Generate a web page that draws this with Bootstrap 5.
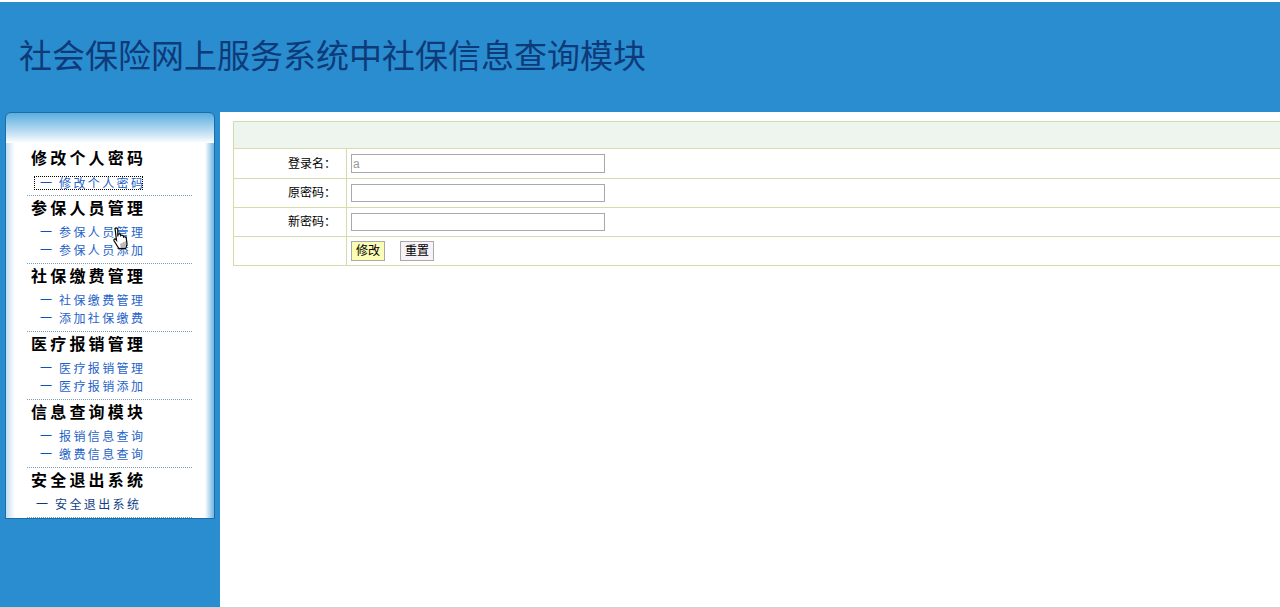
<!DOCTYPE html>
<html lang="zh-CN">

<head>
  <meta charset="UTF-8" />
  <title>社会保险网上服务系统</title>
  <link href="https://cdn.jsdelivr.net/npm/bootstrap@5.3.0/dist/css/bootstrap.min.css" rel="stylesheet" />
  <style>
    html, body { height: 608px; overflow: hidden; }
    body {
      font-family: "Liberation Sans", "Noto Sans CJK SC", sans-serif;
      font-size: 12px;
      color: #000;
      background: #fff;
      padding-top: 2px;
      border-bottom: 1px solid #d0d0d0;
    }
    #top-bar { height: 110px; background: #2a8dd0; padding: 0 0 6px 19px; }
    #top-bar h1 { font-size: 33px; font-weight: 400; color: #0d3a78; margin: 0; line-height: 1; font-family: "Noto Sans CJK SC", sans-serif; }
    #content-wrap { height: 495px; }
    #side-col { width: 220px; flex: none; background: #2a8dd0; padding-left: 5px; }
    #side-panel {
      width: 210px;
      height: 407px;
      border: 1px solid #1a6ea8;
      border-top-left-radius: 6px;
      border-top-right-radius: 6px;
      padding: 33px 0 0 21px;
      background:
        linear-gradient(to bottom, #5aaee0 0, #cfe6f6 22px, #fff 30px, rgba(255,255,255,0) 30px),
        linear-gradient(to right, #c4def4 0, #fff 9px, #fff 199px, #6fb4e2 208px);
    }
    .menu-group { width: 165px; border-bottom: 1px dotted #7a9fb5; padding-bottom: 4px; }
    .menu-group h5 {
      font-family: "Noto Sans CJK SC", sans-serif;
      font-size: 16px;
      font-weight: 700;
      letter-spacing: 3.2px;
      line-height: 22px;
      margin: 0 0 5px 4px;
      color: #000;
    }
    .menu-link {
      display: flex;
      height: 18px;
      line-height: 18px;
      margin-left: 13px;
      color: #1f63c8;
      text-decoration: none;
      font-family: "Noto Sans CJK SC", sans-serif;
      font-size: 12px;
      letter-spacing: 2.4px;
      white-space: nowrap;
    }
    .menu-link i { font-style: normal; width: 19px; letter-spacing: 0; flex: none; color: #0a55b8; }
    .menu-link.active-link { outline: 1px dotted #000; outline-offset: -1px; margin-left: 7px; padding-left: 6px; width: 109px; height: 14px; line-height: 14px; margin-top: 8px; margin-bottom: 1px; }
    .menu-link.dark-link { color: #123f86; margin-left: 9px; }
    .menu-link.dark-link i { color: #0d3a78; }
    #main-col { flex: 1 1 auto; min-width: 0; overflow: hidden; padding: 9px 0 0 13px; }
    #pwd-table { width: 1060px; border-collapse: collapse; margin: 0; }
    #pwd-table td { border: 1px solid #d3dcaa; padding: 0 4px; vertical-align: middle; height: 29px; }
    #pwd-table tr.head-row td { background: #eef5ee; height: 27px; }
    #pwd-table tr.first-row td { height: 30px; }
    #pwd-table td.label-cell { width: 113px; text-align: right; padding: 0 10px 2px 4px; font-family: "Noto Sans CJK SC", sans-serif; }
    .text-box { width: 254px; height: 18px; border: 1px solid #a9a9a9; padding: 0 1px; font-size: 12px; color: #999; display: block; outline: 0; }
    tr.first-row .text-box { height: 19px; }
    .small-btn {
      width: 34px;
      height: 20px;
      padding: 0 0 2px;
      border: 1px solid #a9a9a9;
      border-radius: 0;
      font-family: "Noto Sans CJK SC", sans-serif;
      font-size: 12px;
      line-height: 16px;
      color: #000;
      background: #f7f2f7;
    }
    .small-btn.yellow-btn { background: #fbfdb4; }
    .btn-gap { margin-left: 15px; }
    #hand-cursor { position: absolute; left: 112px; top: 227px; }
  </style>
</head>

<body>
  <div id="top-bar" class="d-flex align-items-center">
    <h1>社会保险网上服务系统中社保信息查询模块</h1>
  </div>
  <div id="content-wrap" class="d-flex">
    <div id="side-col">
      <div id="side-panel">
        <div class="menu-group">
          <h5>修改个人密码</h5>
          <a class="menu-link active-link" href="#"><i>一</i>修改个人密码</a>
        </div>
        <div class="menu-group">
          <h5>参保人员管理</h5>
          <a class="menu-link" href="#"><i>一</i>参保人员管理</a>
          <a class="menu-link" href="#"><i>一</i>参保人员添加</a>
        </div>
        <div class="menu-group">
          <h5>社保缴费管理</h5>
          <a class="menu-link" href="#"><i>一</i>社保缴费管理</a>
          <a class="menu-link" href="#"><i>一</i>添加社保缴费</a>
        </div>
        <div class="menu-group">
          <h5>医疗报销管理</h5>
          <a class="menu-link" href="#"><i>一</i>医疗报销管理</a>
          <a class="menu-link" href="#"><i>一</i>医疗报销添加</a>
        </div>
        <div class="menu-group">
          <h5>信息查询模块</h5>
          <a class="menu-link" href="#"><i>一</i>报销信息查询</a>
          <a class="menu-link" href="#"><i>一</i>缴费信息查询</a>
        </div>
        <div class="menu-group">
          <h5>安全退出系统</h5>
          <a class="menu-link dark-link" href="#"><i>一</i>安全退出系统</a>
        </div>
      </div>
    </div>
    <div id="main-col">
      <table id="pwd-table">
        <tr class="head-row"><td colspan="2"></td></tr>
        <tr class="first-row">
          <td class="label-cell">登录名：</td>
          <td><input class="text-box" type="text" value="a" /></td>
        </tr>
        <tr>
          <td class="label-cell">原密码：</td>
          <td><input class="text-box" type="password" /></td>
        </tr>
        <tr>
          <td class="label-cell">新密码：</td>
          <td><input class="text-box" type="password" /></td>
        </tr>
        <tr>
          <td class="label-cell"></td>
          <td>
            <div class="d-flex">
              <button type="button" class="btn small-btn yellow-btn">修改</button>
              <button type="button" class="btn small-btn btn-gap">重置</button>
            </div>
          </td>
        </tr>
      </table>
    </div>
  </div>
  <svg id="hand-cursor" width="18" height="24" viewBox="0 0 18 24">
    <path d="M3 1.5c1 -1 2.5 -.5 2.8 1v7l.2-2c.8-1 2.2-.8 2.6.2l.2 1c.8-.8 2.2-.6 2.6.4l.2 1c.8-.6 2.2-.4 2.6.6l.8 6c0 2-1 3-1.5 5H7l-5-8c-.5-1.2.6-2.2 1.7-1.5l.8 1-1.5-11.7z" fill="#fff" stroke="#000" stroke-width="1.2" />
    <path d="M8 17l6-3 0 4-1 4H9z" fill="#bbb" />
    <path d="M7 21.5h7" stroke="#000" stroke-width="1.2" />
  </svg>
  <script src="https://cdn.jsdelivr.net/npm/bootstrap@5.3.0/dist/js/bootstrap.bundle.min.js"></script>
</body>

</html>
